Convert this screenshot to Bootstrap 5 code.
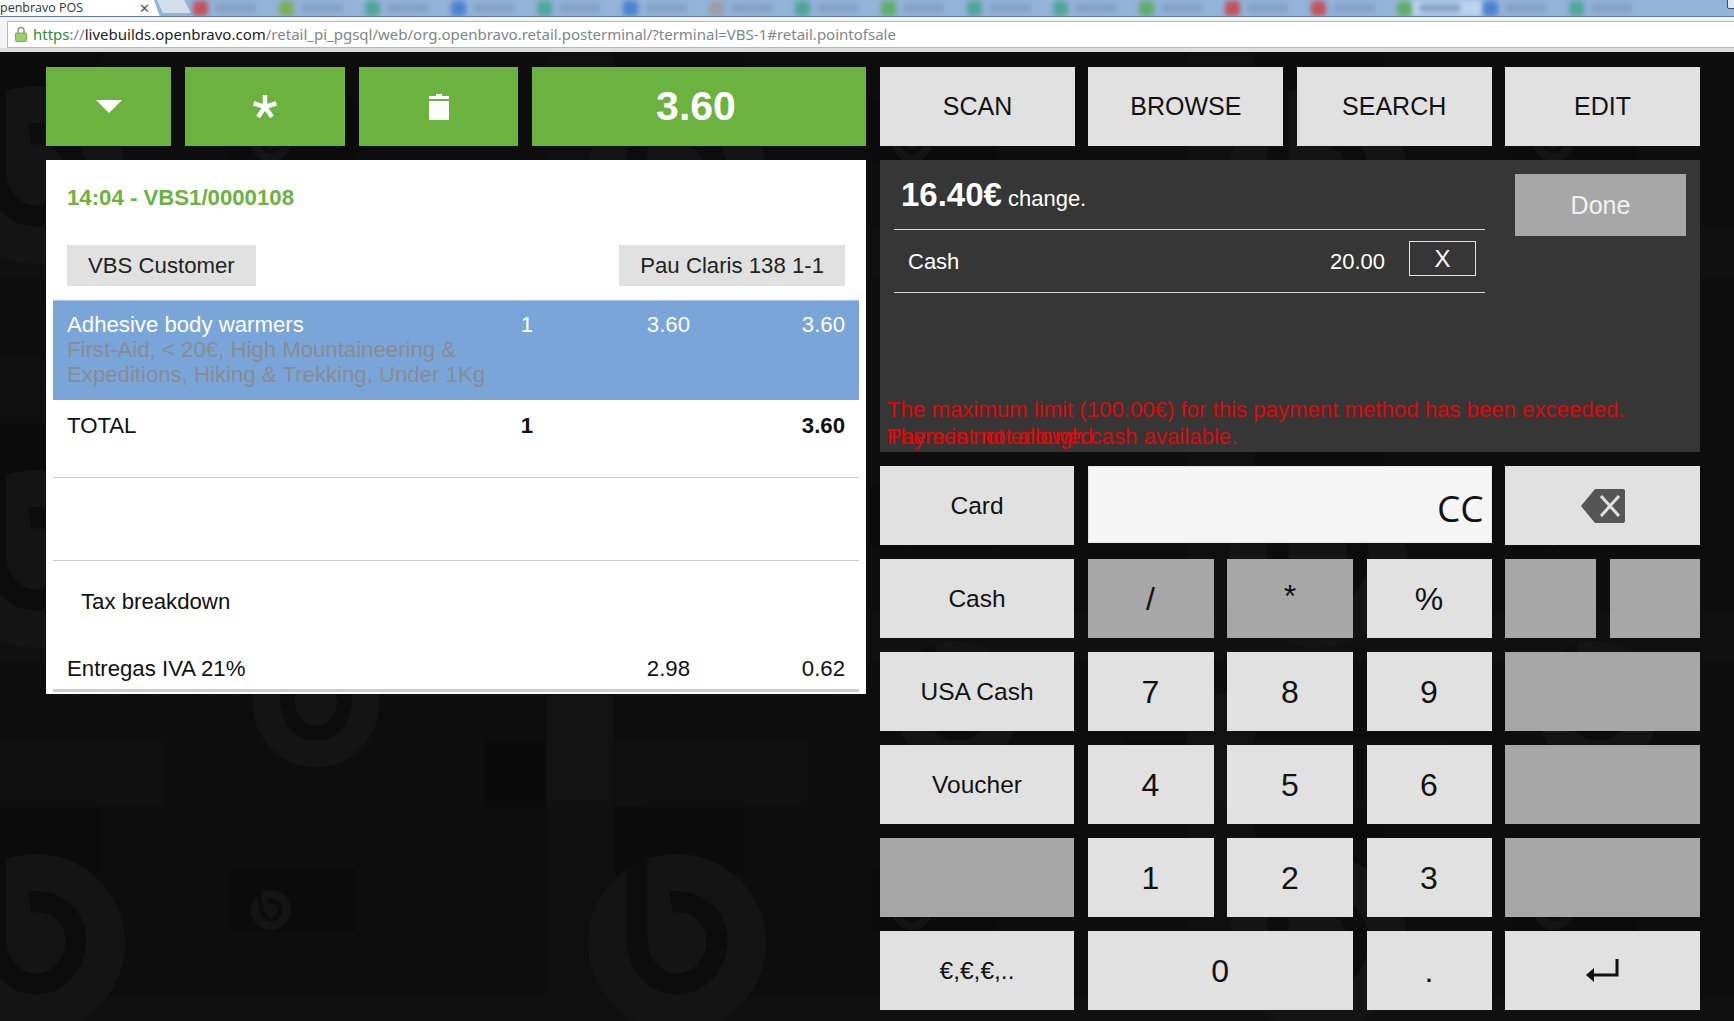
<!DOCTYPE html>
<html lang="en">
<head>
    <meta charset="UTF-8">
    <title>Openbravo POS</title>
    <link href="https://cdn.jsdelivr.net/npm/bootstrap@5.3.0/dist/css/bootstrap.min.css" rel="stylesheet">
    <style>
        body {
            font-family: "Liberation Sans", Arial, sans-serif;
            background-color: #0d0d0d;
            overflow: hidden;
            height: 1021px;
        }
        /* browser chrome */
        .tab-strip { height: 17px; background-color: #93b3da; border-bottom: 1px solid #5f7c9e; position: relative; overflow: hidden; }
        .tab-active { width: 160px; height: 17px; flex: none; padding-top: 1px; background-color: #fff; clip-path: polygon(0 0, 154px 0, 160px 17px, 0 17px); font: 12.5px/14px "Open Sans", sans-serif; color: #333; white-space: nowrap; }
        .tab-close { margin-left: 56px; font-size: 13px; line-height: 14px; color: #555; }
        .tab-new { width: 34px; height: 13px; flex: none; margin-left: -3px; background-color: #d3deec; clip-path: polygon(0 0, 27px 0, 34px 13px, 6px 13px); }
        .tab-blurred { flex: 0 0 86px; height: 16px; gap: 8px; filter: blur(2.5px); }
        .tab-blurred.is-lit { background-color: #bcd4f0; }
        .tab-spacer { width: 2px; flex: none; }
        .win-ctl { position: absolute; right: -3px; top: -3px; width: 10px; height: 12px; border: 1px solid #35506f; border-radius: 2px; background-color: #dfe8f2; }
        .fav { width: 15px; height: 15px; border-radius: 4px; flex: none; }
        .fav-red { background-color: #c2525a; }
        .fav-green { background-color: #5fae6a; }
        .fav-teal { background-color: #4fa69a; }
        .fav-blue { background-color: #4b82d0; }
        .fav-grey { background-color: #9a9ea8; }
        .fav-yellow { background-color: #7fae5c; }
        .tab-label { width: 40px; height: 8px; background-color: #85a1c5; }
        .url-bar { height: 35px; background-color: #f4f4f4; border-bottom: 4px solid #dedede; padding: 4px 0 0 7px; }
        .url-box { height: 27px; background-color: #fff; border: 1px solid #b9b9b9; border-right: 0; font: 15px/22px "Noto Sans", sans-serif; color: #80868b; padding: 0 0 2px 7px; gap: 6px; }
        .url-https { color: #2f8a3c; }
        .url-host { color: #222; }

        /* pos screen */
        .pos-screen { position: relative; height: 969px; padding: 15px 34px 0 46px; gap: 14px; overflow: hidden; }
        .pos-bg { position: absolute; left: 0; top: -52px; width: 1734px; height: 1021px; }
        .pos-col { position: relative; width: 820px; flex: none; }
        .top-row { height: 79px; gap: 14px; margin-bottom: 14px; }
        .green-btn { background-color: #6bb23e; color: #fff; border: 0; border-radius: 0; padding: 0; display: flex; align-items: center; justify-content: center; }
        .green-btn:hover { background-color: #6bb23e; color: #fff; }
        .w-menu { width: 125px; }
        .w-star { width: 160px; }
        .w-trash { width: 159px; }
        .w-total { flex: 1; font-size: 41px; font-weight: 700; padding-right: 6px; }
        .mode-row { display: grid; grid-template-columns: repeat(4, 1fr); gap: 13.33px; height: 79px; margin-bottom: 14px; }
        .pos-key { background-color: #e1e1e1; color: #111; border: 0; border-radius: 0; padding: 2px 0 0; font-size: 24.5px; display: flex; align-items: center; justify-content: center; }
        .pos-key:hover { background-color: #e1e1e1; color: #111; }
        .key-mode { font-size: 25px; padding-top: 0; }
        .key-num { font-size: 32px; padding-top: 0; }
        .key-icon { padding-top: 0; }
        .key-star { padding-bottom: 6px; }
        .key-off, .key-off:hover { background-color: #a7a7a7; }

        .ticket { background-color: #fff; height: 534px; padding: 25px 7px 0; color: #111; font-size: 22.2px; line-height: 25px; }
        .ticket-title { color: #6bb23e; font-weight: 700; padding-left: 14px; height: 25px; }
        .ticket-btns { margin-top: 35px; padding: 0 14px; height: 41px; margin-bottom: 14px; }
        .chip { background-color: #e1e1e1; color: #222; border: 0; border-radius: 0; font-size: 22.2px; line-height: 41px; padding: 0 21px; }
        .chip:hover { background-color: #e1e1e1; color: #222; }
        .t-row { padding: 0 14px; }
        .t-name { width: 430px; flex: none; }
        .t-qty { width: 36px; flex: none; text-align: right; }
        .t-price { width: 157px; flex: none; text-align: right; }
        .t-total { flex: 1; text-align: right; }
        .t-selected { background-color: #7aa5d9; color: #fff; height: 100px; padding-top: 11px; border-top: 1px solid #a9c3e4; }
        .t-cats { color: #878c92; white-space: nowrap; }
        .t-sum { height: 78px; padding-top: 13px; border-bottom: 1px solid #cfcfcf; }
        .t-blank { height: 83px; border-bottom: 1px solid #cfcfcf; }
        .t-tax-head { padding: 28px 0 0 28px; height: 80px; }
        .t-tax { height: 51px; padding-top: 15px; border-bottom: 3px solid #cdcdcd; }

        .pay-panel { background-color: #363636; color: #fff; height: 292px; padding-left: 14px; font-size: 22px; margin-bottom: 14px; }
        .pay-lines { width: 591px; flex: none; }
        .pay-change { height: 69px; padding: 10px 0 0 7px; }
        .pay-amount { font-size: 33px; font-weight: 700; margin-right: 6px; }
        .pay-line { height: 64px; border-top: 1px solid #d8d8d8; border-bottom: 1px solid #d8d8d8; padding: 0 9px 0 14px; }
        .pay-x { width: 67px; height: 35px; margin-left: 24px; margin-top: -5px; background: none; border: 1px solid #e4e4e4; border-radius: 0; color: #fff; padding: 0; font-size: 24px; line-height: 30px; }
        .pay-x:hover { color: #fff; border-color: #e4e4e4; }
        .pay-sum { margin-left: auto; }
        .btn-done { width: 171px; height: 62px; margin: 14px 14px 0 30px; background-color: #a7a7a7; border: 0; border-radius: 0; color: #f2f2f2; font-size: 25px; padding: 2px 0 0; }
        .btn-done:hover { background-color: #a7a7a7; color: #f2f2f2; }
        .pay-msgs { color: #dc0a0a; font-size: 22.2px; line-height: 27px; margin-left: -7px; margin-right: -7px; padding-bottom: 2px; }
        .msg-stack { display: grid; }
        .msg-stack > span { grid-area: 1 / 1; }

        .keypad { display: grid; grid-template-columns: 194px 126px 126px 125px 91px 90.5px; grid-auto-rows: 79px; column-gap: 13.5px; row-gap: 14px; }
        .span-2 { grid-column: span 2; }
        .span-3 { grid-column: span 3; }
        .key-input { background-color: #f5f5f5; height: 77px; border: 1px solid #e6e6e6; font: 37px/1 "Open Sans", sans-serif; color: #111; padding: 22px 7px 0 0; text-align: right; }
    </style>
</head>
<body>
    <!-- browser window top -->
    <div class="tab-strip d-flex align-items-start">
        <div class="tab-active d-flex align-items-start">penbravo POS<span class="tab-close">✕</span></div>
        <div class="tab-new"></div>
        <div class="tab-spacer"></div>
        <div class="tab-blurred d-flex align-items-center"><span class="fav fav-red"></span><span class="tab-label"></span></div>
        <div class="tab-blurred d-flex align-items-center"><span class="fav fav-yellow"></span><span class="tab-label"></span></div>
        <div class="tab-blurred d-flex align-items-center"><span class="fav fav-teal"></span><span class="tab-label"></span></div>
        <div class="tab-blurred d-flex align-items-center"><span class="fav fav-blue"></span><span class="tab-label"></span></div>
        <div class="tab-blurred d-flex align-items-center"><span class="fav fav-teal"></span><span class="tab-label"></span></div>
        <div class="tab-blurred d-flex align-items-center"><span class="fav fav-blue"></span><span class="tab-label"></span></div>
        <div class="tab-blurred d-flex align-items-center"><span class="fav fav-grey"></span><span class="tab-label"></span></div>
        <div class="tab-blurred d-flex align-items-center"><span class="fav fav-teal"></span><span class="tab-label"></span></div>
        <div class="tab-blurred d-flex align-items-center"><span class="fav fav-green"></span><span class="tab-label"></span></div>
        <div class="tab-blurred d-flex align-items-center"><span class="fav fav-teal"></span><span class="tab-label"></span></div>
        <div class="tab-blurred d-flex align-items-center"><span class="fav fav-teal"></span><span class="tab-label"></span></div>
        <div class="tab-blurred d-flex align-items-center"><span class="fav fav-green"></span><span class="tab-label"></span></div>
        <div class="tab-blurred d-flex align-items-center"><span class="fav fav-red"></span><span class="tab-label"></span></div>
        <div class="tab-blurred d-flex align-items-center"><span class="fav fav-red"></span><span class="tab-label"></span></div>
        <div class="tab-blurred is-lit d-flex align-items-center"><span class="fav fav-green"></span><span class="tab-label"></span></div>
        <div class="tab-blurred d-flex align-items-center"><span class="fav fav-blue"></span><span class="tab-label"></span></div>
        <div class="tab-blurred d-flex align-items-center"><span class="fav fav-teal"></span><span class="tab-label"></span></div>
        <div class="win-ctl"></div>
    </div>
    <div class="url-bar">
        <div class="url-box d-flex align-items-center">
            <svg width="12" height="16" viewBox="0 0 12 16"><path d="M3 8V4.5a3 3 0 0 1 6 0V8" fill="none" stroke="#8a9a70" stroke-width="1.5"/><rect x="0.5" y="7" width="11" height="8.5" rx="1" fill="#9bd068" stroke="#7aa850"/></svg>
            <span><span class="url-https">https</span>://<span class="url-host">livebuilds.openbravo.com</span>/retail_pi_pgsql/web/org.openbravo.retail.posterminal/?terminal=VBS-1#retail.pointofsale</span>
        </div>
    </div>

    <div class="pos-screen d-flex">
        <!-- wallpaper: tile of squares and b logos -->
        <svg class="pos-bg" viewBox="0 0 1734 1021" aria-hidden="true">
            <defs>
                <clipPath id="logoClip"><circle r="89"/></clipPath>
                <g id="logo">
                    <circle r="89" fill="#141414"/>
                    <path d="M-40 -95V-3A40 44 0 0 0 40 -3A40 38 0 0 0 -6 -41" fill="none" stroke="#0c0c0c" stroke-width="21" clip-path="url(#logoClip)"/>
                </g>
                <g id="tile">
                    <rect x="0" y="740" width="166" height="67" fill="#0f0f0f"/>
                    <rect x="0" y="807" width="102" height="66" fill="#0b0b0b"/>
                    <rect x="230" y="867" width="125" height="66" fill="#0b0b0b"/>
                    <rect x="484" y="740" width="62" height="67" fill="#0a0a0a"/>
                    <rect x="546" y="693" width="68" height="114" fill="#121212"/>
                    <rect x="614" y="740" width="191" height="67" fill="#101010"/>
                    <rect x="614" y="807" width="126" height="66" fill="#0b0b0b"/>
                    <rect x="546" y="807" width="68" height="190" fill="#0f0f0f"/>
                    <rect x="0" y="997" width="1282" height="48" fill="#101010"/>
                    <use href="#logo" transform="translate(36 943)"/>
                    <use href="#logo" transform="translate(677 943)"/>
                    <use href="#logo" transform="translate(316 704) scale(.71)"/>
                    <use href="#logo" transform="translate(271 910) rotate(-12) scale(.225)"/>
                </g>
            </defs>
            <use href="#tile" transform="translate(0 -768)"/>
            <use href="#tile" transform="translate(641 -768)"/>
            <use href="#tile" transform="translate(1282 -768)"/>
            <use href="#tile" transform="translate(0 -384)"/>
            <use href="#tile" transform="translate(641 -384)"/>
            <use href="#tile" transform="translate(1282 -384)"/>
            <use href="#tile"/>
            <use href="#tile" transform="translate(641 0)"/>
            <use href="#tile" transform="translate(1282 0)"/>
        </svg>

        <!-- left column: order -->
        <div class="pos-col">
            <div class="top-row d-flex">
                <button class="btn green-btn w-menu" type="button" aria-label="Menu">
                    <svg width="26" height="13" viewBox="0 0 26 13"><path d="M0 0H26L13 13Z" fill="#fff"/></svg>
                </button>
                <button class="btn green-btn w-star" type="button" aria-label="New">
                    <svg width="26" height="24" viewBox="0 0 26 24"><path d="M13 0V12M13 12L1.6 8.3M13 12L24.4 8.3M13 12L6 22M13 12L20 22" fill="none" stroke="#fff" stroke-width="4.5"/></svg>
                </button>
                <button class="btn green-btn w-trash" type="button" aria-label="Delete">
                    <svg width="20" height="26" viewBox="0 0 20 26"><path d="M7 0H13V2H20V5H0V2H7ZM0 7H20V26H0Z" fill="#fff"/></svg>
                </button>
                <button class="btn green-btn w-total" type="button">3.60</button>
            </div>
            <div class="ticket">
                <div class="ticket-title">14:04 - VBS1/0000108</div>
                <div class="ticket-btns d-flex justify-content-between">
                    <button class="btn chip" type="button">VBS Customer</button>
                    <button class="btn chip" type="button">Pau Claris 138 1-1</button>
                </div>
                <div class="t-row t-selected d-flex">
                    <div class="t-name">Adhesive body warmers
                        <div class="t-cats">First-Aid, &lt; 20€, High Mountaineering &amp;<br>Expeditions, Hiking &amp; Trekking, Under 1Kg</div>
                    </div>
                    <div class="t-qty">1</div>
                    <div class="t-price">3.60</div>
                    <div class="t-total">3.60</div>
                </div>
                <div class="t-row t-sum d-flex">
                    <div class="t-name">TOTAL</div>
                    <div class="t-qty fw-bold">1</div>
                    <div class="t-price"></div>
                    <div class="t-total fw-bold">3.60</div>
                </div>
                <div class="t-blank"></div>
                <div class="t-tax-head">Tax breakdown</div>
                <div class="t-row t-tax d-flex">
                    <div class="t-name">Entregas IVA 21%</div>
                    <div class="t-qty"></div>
                    <div class="t-price">2.98</div>
                    <div class="t-total">0.62</div>
                </div>
            </div>
        </div>

        <!-- right column: payment -->
        <div class="pos-col">
            <div class="mode-row">
                <button class="btn pos-key key-mode" type="button">SCAN</button>
                <button class="btn pos-key key-mode" type="button">BROWSE</button>
                <button class="btn pos-key key-mode" type="button">SEARCH</button>
                <button class="btn pos-key key-mode" type="button">EDIT</button>
            </div>
            <div class="pay-panel d-flex flex-column justify-content-between">
                <div class="d-flex">
                    <div class="pay-lines">
                        <div class="pay-change d-flex align-items-baseline"><span class="pay-amount">16.40€</span> change.</div>
                        <div class="pay-line d-flex align-items-center">
                            <span>Cash</span>
                            <span class="pay-sum">20.00</span>
                            <button class="btn pay-x" type="button">X</button>
                        </div>
                    </div>
                    <button class="btn btn-done" type="button">Done</button>
                </div>
                <div class="pay-msgs">
                    <div>The maximum limit (100.00€) for this payment method has been exceeded.</div>
                    <div class="msg-stack"><span>There is not enough cash available.</span><span>Payment not allowed</span></div>
                </div>
            </div>
            <div class="keypad">
                <button class="btn pos-key" type="button">Card</button>
                <div class="key-input span-3">CC</div>
                <button class="btn pos-key key-icon span-2" type="button" aria-label="Backspace">
                    <svg width="44" height="34" viewBox="0 0 44 34"><path d="M14 0H42Q44 0 44 2V32Q44 34 42 34H14L0 17Z" fill="#555"/><path d="M20 7L38 27M38 7L20 27" stroke="#e1e1e1" stroke-width="3"/></svg>
                </button>

                <button class="btn pos-key" type="button">Cash</button>
                <button class="btn pos-key key-num key-off" type="button">/</button>
                <button class="btn pos-key key-num key-off key-star" type="button">*</button>
                <button class="btn pos-key key-num" type="button">%</button>
                <button class="btn pos-key key-off" type="button" aria-label="Empty"></button>
                <button class="btn pos-key key-off" type="button" aria-label="Empty"></button>

                <button class="btn pos-key" type="button">USA Cash</button>
                <button class="btn pos-key key-num" type="button">7</button>
                <button class="btn pos-key key-num" type="button">8</button>
                <button class="btn pos-key key-num" type="button">9</button>
                <button class="btn pos-key key-off span-2" type="button" aria-label="Empty"></button>

                <button class="btn pos-key" type="button">Voucher</button>
                <button class="btn pos-key key-num" type="button">4</button>
                <button class="btn pos-key key-num" type="button">5</button>
                <button class="btn pos-key key-num" type="button">6</button>
                <button class="btn pos-key key-off span-2" type="button" aria-label="Empty"></button>

                <button class="btn pos-key key-off" type="button" aria-label="Empty"></button>
                <button class="btn pos-key key-num" type="button">1</button>
                <button class="btn pos-key key-num" type="button">2</button>
                <button class="btn pos-key key-num" type="button">3</button>
                <button class="btn pos-key key-off span-2" type="button" aria-label="Empty"></button>

                <button class="btn pos-key" type="button">€,€,€,..</button>
                <button class="btn pos-key key-num span-2" type="button">0</button>
                <button class="btn pos-key key-num" type="button">.</button>
                <button class="btn pos-key key-icon span-2" type="button" aria-label="Enter">
                    <svg width="33" height="23" viewBox="0 0 33 23"><path d="M31 0V16H6" fill="none" stroke="#111" stroke-width="3"/><path d="M0 16L8 9V23Z" fill="#111"/></svg>
                </button>
            </div>
        </div>
    </div>

    <script src="https://cdn.jsdelivr.net/npm/bootstrap@5.3.0/dist/js/bootstrap.bundle.min.js"></script>
</body>
</html>
